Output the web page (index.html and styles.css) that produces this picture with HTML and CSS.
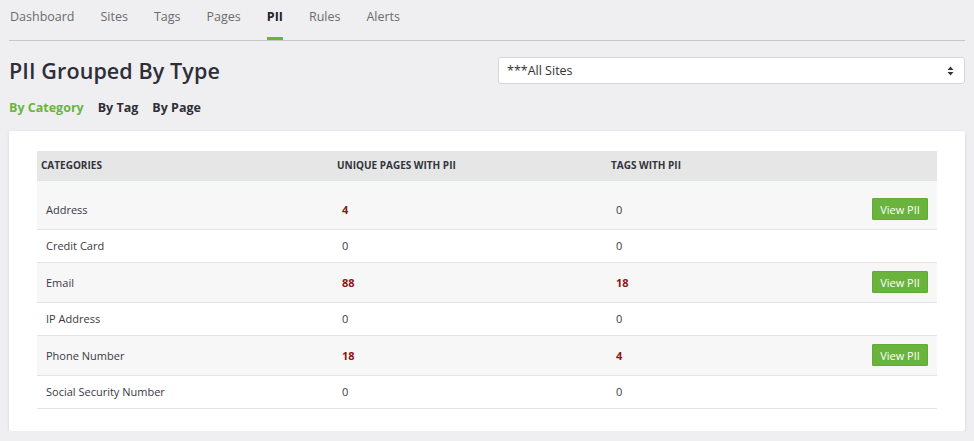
FILE: index.html
```html
<!DOCTYPE html>
<html>
<head>
<meta charset="utf-8">
<link rel="stylesheet" href="styles.css">
</head>
<body>
<nav class="nav">
  <a class="nav-item">Dashboard</a>
  <a class="nav-item">Sites</a>
  <a class="nav-item">Tags</a>
  <a class="nav-item">Pages</a>
  <a class="nav-item active">PII</a>
  <a class="nav-item">Rules</a>
  <a class="nav-item">Alerts</a>
</nav>
<div class="head">
  <h1 class="title">PII Grouped By Type</h1>
  <div class="select">
    <span>***All Sites</span>
    <svg class="arrows" width="7" height="10" viewBox="0 0 7 10"><path d="M3.5 0.5 L6.5 4 L0.5 4 Z M3.5 9.5 L6.5 6 L0.5 6 Z" fill="#333"/></svg>
  </div>
</div>
<div class="tabs">
  <a class="tab active">By Category</a>
  <a class="tab">By Tag</a>
  <a class="tab">By Page</a>
</div>
<div class="card">
  <table class="table">
    <thead>
      <tr><th class="c1">Categories</th><th class="c2">Unique Pages With PII</th><th class="c3">Tags With PII</th><th class="c4"></th></tr>
    </thead>
    <tbody>
      <tr class="odd first"><td>Address</td><td class="hit">4</td><td>0</td><td class="act"><button class="btn">View PII</button></td></tr>
      <tr class="plain"><td>Credit Card</td><td>0</td><td>0</td><td class="act"></td></tr>
      <tr class="odd"><td>Email</td><td class="hit">88</td><td class="hit">18</td><td class="act"><button class="btn">View PII</button></td></tr>
      <tr class="plain"><td>IP Address</td><td>0</td><td>0</td><td class="act"></td></tr>
      <tr class="odd"><td>Phone Number</td><td class="hit">18</td><td class="hit">4</td><td class="act"><button class="btn">View PII</button></td></tr>
      <tr class="plain"><td>Social Security Number</td><td>0</td><td>0</td><td class="act"></td></tr>
    </tbody>
  </table>
</div>
</body>
</html>
```
FILE: styles.css
```css
* { box-sizing: border-box; }
html, body { margin: 0; }
body {
  background: #efeff1;
  padding: 0 9px;
  font-family: "Open Sans", "DejaVu Sans", sans-serif;
  color: #34343d;
}
.nav {
  display: flex;
  gap: 26px;
  height: 41px;
  padding-left: 1px;
  border-bottom: 1px solid #c6c6c8;
}
.nav-item {
  display: block;
  height: 40px;
  line-height: 34px;
  font-size: 12.5px;
  color: #6b6b70;
  font-weight: 500;
}
.nav-item.active {
  color: #222;
  font-weight: 700;
  box-shadow: inset 0 -3px 0 #6ab43e;
}
.head {
  display: flex;
  justify-content: space-between;
  align-items: center;
  margin-top: 16px;
  height: 27px;
}
.title {
  margin: 0;
  font-size: 21.5px;
  line-height: 27px;
  font-weight: 600;
  color: #2e2e38;
  letter-spacing: 0.1px;
}
.select {
  width: 467px;
  height: 27px;
  background: #fff;
  border: 1px solid #d6d6da;
  border-radius: 3px;
  display: flex;
  align-items: center;
  justify-content: space-between;
  padding: 0 10px 0 8px;
  font-size: 12.5px;
  color: #333;
}
.arrows { display: block; }
.tabs {
  display: flex;
  gap: 14px;
  margin-top: 15px;
  height: 18px;
  line-height: 18px;
}
.tab {
  font-size: 12.5px;
  font-weight: 700;
  color: #2e2e38;
}
.tab.active { color: #6ab43e; }
.card {
  margin-top: 14px;
  background: #fff;
  padding: 20px 28px 22px;
  box-shadow: 0 1px 3px rgba(0,0,0,0.12);
  border-radius: 2px;
}
.table {
  width: 100%;
  border-collapse: collapse;
  font-size: 11px;
}
.table th {
  background: #e6e6e6;
  height: 29px;
  text-align: left;
  font-size: 10px;
  font-weight: 700;
  text-transform: uppercase;
  color: #33333b;
  padding: 0 4px;
  border-bottom: 1px solid #dfe4ea;
}
.c1 { width: 296px; }
.c2 { width: 274px; }
.table td {
  padding: 0 9px;
  border-bottom: 1px solid #e4e4e6;
  color: #3a3a42;
}
.table tr.odd td { background: #f7f7f7; height: 40px; }
.table tr.first td { height: 49px; padding-top: 9px; }
.table tr.plain td { background: #fff; height: 33px; }
.table td.hit { color: #8e1515; font-weight: 700; }
.table td.act { text-align: right; }
.btn {
  background: #6ab43e;
  color: #fff;
  border: 1px solid #62ab37;
  font-family: inherit;
  font-size: 11px;
  height: 22px;
  width: 56px;
  padding: 0;
  border-radius: 1px;
  vertical-align: middle;
}
```
